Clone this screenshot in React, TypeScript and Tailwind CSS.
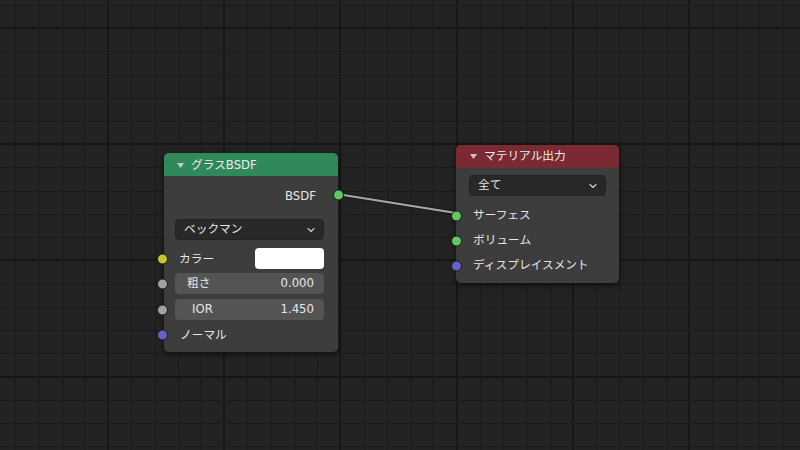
import { ChevronDown } from "lucide-react";

const STEP = 23.24;

// grid lines of the node editor canvas
function Grid() {
  const xs: { x: number; major: boolean }[] = [];
  for (let k = 0; 15.1 + k * STEP < 800; k++) {
    xs.push({ x: Math.round(15.1 + k * STEP), major: k % 5 === 4 });
  }
  const ys: { y: number; major: boolean }[] = [];
  for (let k = 0; 4.8 + k * STEP < 450; k++) {
    ys.push({ y: Math.round(4.8 + k * STEP), major: k % 5 === 1 });
  }
  return (
    <svg className="absolute inset-0" width={800} height={450}>
      {xs.map((l) => (
        <rect
          key={`x${l.x}`}
          x={l.major ? l.x - 1 : l.x}
          y={0}
          width={l.major ? 2 : 1}
          height={450}
          fill={l.major ? "#171717" : "#1b1b1b"}
        />
      ))}
      {ys.map((l) => (
        <rect
          key={`y${l.y}`}
          x={0}
          y={l.major ? l.y - 1 : l.y}
          width={800}
          height={l.major ? 2 : 1}
          fill={l.major ? "#171717" : "#1b1b1b"}
        />
      ))}
    </svg>
  );
}

function Socket({ color, side }: { color: string; side: "left" | "right" }) {
  return (
    <span
      className={`absolute top-1/2 -translate-y-1/2 w-[11px] h-[11px] rounded-full border border-[#1a1a1a] ${color} ${side === "left" ? "left-[-18px]" : "right-[-20px]"}`}
    />
  );
}

function Triangle() {
  return (
    <svg width="7" height="5" viewBox="0 0 7 5" className="shrink-0">
      <path d="M0 0 L7 0 L3.5 5 Z" fill="#c9c9c9" />
    </svg>
  );
}

function Dropdown({ label }: { label: string }) {
  return (
    <div className="h-[21px] flex items-center justify-between pl-[8px] pr-[6px] pt-[1px] rounded-[4px] bg-[#282828] border border-[#232323] text-[#e6e6e6]">
      <span>{label}</span>
      <ChevronDown size={12} strokeWidth={2.2} className="text-[#d0d0d0]" />
    </div>
  );
}

function Slider({ label, value, pl }: { label: string; value: string; pl: string }) {
  return (
    <div className="relative h-[21px]">
      <Socket color="bg-[#a1a1a1]" side="left" />
      <div className={`h-full flex items-center justify-between pr-[10px] pt-[1px] rounded-[4px] bg-[#545454] text-[#e6e6e6] ${pl}`}>
        <span>{label}</span>
        <span>{value}</span>
      </div>
    </div>
  );
}

export default function App() {
  return (
    <div className="relative w-[800px] h-[450px] overflow-hidden bg-[#232323] font-['DejaVu_Sans','Noto_Sans_CJK_JP',sans-serif] text-[11.7px] leading-none">
      <Grid />

      {/* link */}
      <svg className="absolute inset-0" width={800} height={450}>
        <line x1={337} y1={194} x2={456} y2={213} stroke="#1a1a1a" strokeOpacity={0.7} strokeWidth={4.5} />
        <line x1={337} y1={194} x2={456} y2={213} stroke="#a8a8a8" strokeWidth={2.2} />
      </svg>

      {/* Glass BSDF node */}
      <div className="absolute left-[164px] top-[153px] w-[174px] h-[199px] rounded-[5px] bg-[#404040]/90 shadow-[0_2px_6px_rgba(0,0,0,0.55)] flex flex-col">
        <div className="h-[23px] shrink-0 rounded-t-[5px] bg-[#30895a] flex items-center pl-[13px] pt-[2px] gap-[7px] text-[#ececec]">
          <Triangle />
          <span>グラスBSDF</span>
        </div>
        <div className="flex flex-col pl-[11px] pr-[14px]">
          <div className="relative mt-[8px] h-[22px] flex items-center justify-end pr-[8px] pt-[3px] text-[#e6e6e6]">
            BSDF
            <Socket color="bg-[#63c763]" side="right" />
          </div>
          <div className="mt-[13px]">
            <Dropdown label="ベックマン" />
          </div>
          <div className="relative mt-[8px] h-[21px] flex items-center justify-between text-[#e6e6e6]">
            <Socket color="bg-[#c7c729]" side="left" />
            <span className="pl-[4px] pt-[2px]">カラー</span>
            <span className="w-[69px] h-full rounded-[4px] bg-white" />
          </div>
          <div className="mt-[4px]">
            <Slider label="粗さ" value="0.000" pl="pl-[12px]" />
          </div>
          <div className="mt-[5px]">
            <Slider label="IOR" value="1.450" pl="pl-[17px]" />
          </div>
          <div className="relative mt-[5px] h-[20px] flex items-center pt-[2px] text-[#e6e6e6]">
            <Socket color="bg-[#6363c7]" side="left" />
            <span className="pl-[5px]">ノーマル</span>
          </div>
        </div>
      </div>

      {/* Material Output node */}
      <div className="absolute left-[456px] top-[145px] w-[163px] h-[138px] rounded-[5px] bg-[#404040]/90 shadow-[0_2px_6px_rgba(0,0,0,0.55)] flex flex-col">
        <div className="h-[23px] shrink-0 rounded-t-[5px] bg-[#7b2a33] flex items-center pl-[14px] gap-[7px] text-[#ececec]">
          <Triangle />
          <span>マテリアル出力</span>
        </div>
        <div className="flex flex-col pl-[13px] pr-[13px]">
          <div className="mt-[7px]">
            <Dropdown label="全て" />
          </div>
          <div className="mt-[7px] flex flex-col text-[#e6e6e6]">
            {[
              { label: "サーフェス", color: "bg-[#63c763]" },
              { label: "ボリューム", color: "bg-[#63c763]" },
              { label: "ディスプレイスメント", color: "bg-[#6363c7]" },
            ].map((s) => (
              <div key={s.label} className="relative h-[25px] flex items-center pt-[1px]">
                <Socket color={s.color} side="left" />
                <span className="pl-[4px]">{s.label}</span>
              </div>
            ))}
          </div>
        </div>
      </div>
    </div>
  );
}
